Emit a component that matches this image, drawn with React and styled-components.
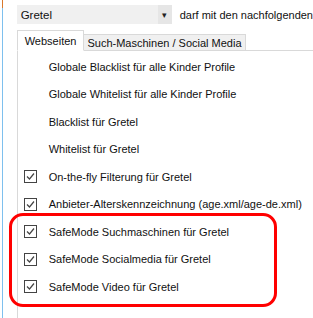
import React from "react"
import styled, { createGlobalStyle } from "styled-components"

const rows = [
  { label: "Globale Blacklist für alle Kinder Profile" },
  { label: "Globale Whitelist für alle Kinder Profile" },
  { label: "Blacklist für Gretel" },
  { label: "Whitelist für Gretel" },
  { label: "On-the-fly Filterung für Gretel", checked: true },
  { label: "Anbieter-Alterskennzeichnung (age.xml/age-de.xml)", checked: true },
  { label: "SafeMode Suchmaschinen für Gretel", checked: true },
  { label: "SafeMode Socialmedia für Gretel", checked: true },
  { label: "SafeMode Video für Gretel", checked: true },
]

function Check() {
  return (
    <CheckBox>
      <svg width="11" height="11" viewBox="0 0 11 11">
        <path d="M2 5.5 L4.5 8 L9 2.5" fill="none" stroke="#444" strokeWidth="1.2" />
      </svg>
    </CheckBox>
  )
}

function App() {
  return (
    <Page>
      <GlobalStyle />
      <Edge>
        <Mark />
        <Line />
      </Edge>
      <Content>
        <Header>
          <Select>
            <span>Gretel</span>
            <Arrow>▾</Arrow>
          </Select>
          <Label>darf mit den nachfolgenden</Label>
        </Header>
        <Tabs>
          <Tab active>Webseiten</Tab>
          <Tab>Such-Maschinen / Social Media</Tab>
          <TabFill />
        </Tabs>
        <Panel>
          {rows.map((r, i) => (
            <Row key={i}>
              <Slot>{r.checked && <Check />}</Slot>
              <span>{r.label}</span>
            </Row>
          ))}
        </Panel>
      </Content>
      <Highlight />
    </Page>
  )
}

const GlobalStyle = createGlobalStyle`
  body {
    margin: 0;
    background: #fff;
    font-family: "Liberation Sans", Arial, sans-serif;
    font-size: 11px;
    color: #111;
  }
`
const Page = styled.div`
  position: relative;
  width: 313px;
  height: 318px;
  display: flex;
  padding-left: 2px;
  box-sizing: border-box;
  overflow: hidden;
`
const Edge = styled.div`
  width: 1px;
  display: flex;
  flex-direction: column;
`
const Mark = styled.div`
  height: 8px;
  background: #d9782c;
`
const Line = styled.div`
  flex: 1;
  background: #7ec0ee;
`
const Content = styled.div`
  flex: 1;
  margin-left: 14px;
  display: flex;
  flex-direction: column;
`
const Header = styled.div`
  display: flex;
  align-items: center;
  margin-top: 5px;
  height: 19px;
  gap: 8px;
`
const Select = styled.div`
  width: 155px;
  height: 19px;
  background: #f0f0f0;
  display: flex;
  align-items: center;
  justify-content: space-between;
  padding-left: 4px;
  box-sizing: border-box;
  font-size: 11.5px;
`
const Arrow = styled.div`
  width: 14px;
  height: 19px;
  background: #e6e6e6;
  display: flex;
  align-items: center;
  justify-content: center;
  font-size: 9px;
  color: #222;
`
const Label = styled.span`
  white-space: nowrap;
`
const Tabs = styled.div`
  display: flex;
  align-items: flex-end;
  margin-top: 6px;
`
const Tab = styled.div`
  height: ${p => (p.active ? "21px" : "17px")};
  padding: ${p => (p.active ? "0 7px" : "0 3px")};
  background: ${p => (p.active ? "#fff" : "#f0f0f0")};
  border: 1px solid #d9d9d9;
  border-bottom: ${p => (p.active ? "1px solid #fff" : "1px solid #d9d9d9")};
  margin-left: ${p => (p.active ? "0" : "-1px")};
  display: flex;
  align-items: center;
  white-space: nowrap;
  box-sizing: border-box;
  position: relative;
  z-index: ${p => (p.active ? 1 : 0)};
`
const TabFill = styled.div`
  flex: 1;
  border-bottom: 1px solid #d9d9d9;
`
const Panel = styled.div`
  flex: 1;
  margin-top: -1px;
  border-left: 1px solid #d9d9d9;
  border-top: 1px solid #d9d9d9;
  padding: 2px 0 0 6px;
  display: flex;
  flex-direction: column;
`
const Row = styled.div`
  height: 27.5px;
  display: flex;
  align-items: center;
  gap: 12px;
  white-space: nowrap;
`
const Slot = styled.div`
  width: 13px;
  height: 13px;
`
const CheckBox = styled.div`
  width: 13px;
  height: 13px;
  border: 1px solid #444;
  box-sizing: border-box;
  display: flex;
  align-items: center;
  justify-content: center;
  background: #fff;
`
const Highlight = styled.div`
  position: absolute;
  left: 9px;
  top: 213px;
  width: 268px;
  height: 94px;
  border: 3px solid #f00;
  border-radius: 14px;
  box-sizing: border-box;
  pointer-events: none;
`

export default App
